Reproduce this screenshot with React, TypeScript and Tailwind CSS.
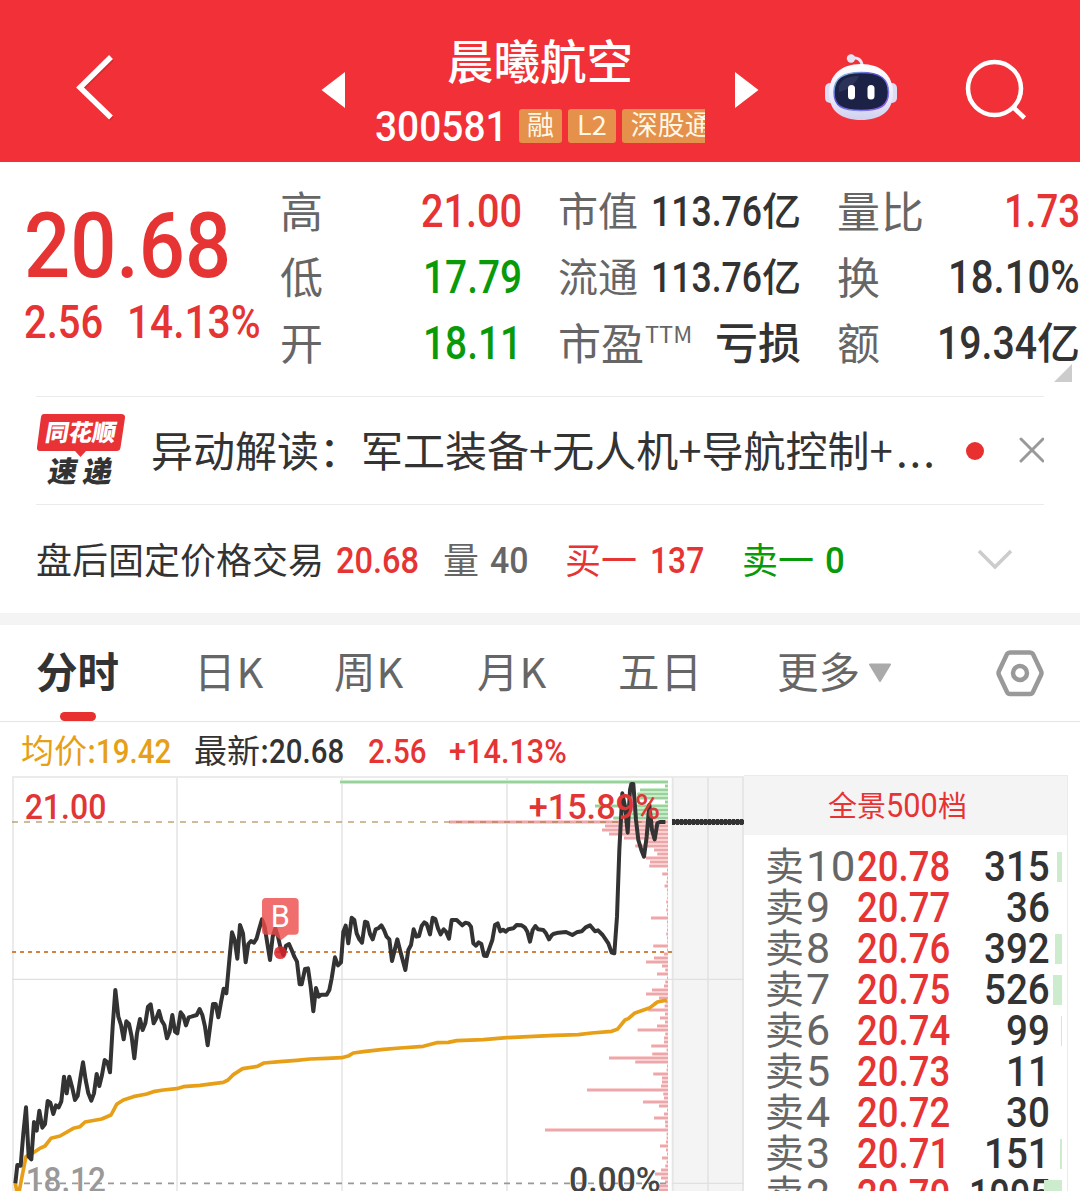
import React, { useLayoutEffect, useRef, useState } from 'react';
import clsx from 'clsx';

const CJK = "font-['Noto_Sans_CJK_SC',sans-serif]";
const RED = 'text-[#e63333]';
const GREEN = 'text-[#089a08]';
const DARK = 'text-[#333333]';
const GRAY = 'text-[#666666]';

interface NumProps {
    width: number;
    className?: string;
    children: React.ReactNode;
}

// 数字使用窄体，按给定宽度横向压缩
const Num: React.FC<NumProps> = ({ width, className, children }) => {
    const ref = useRef<HTMLSpanElement>(null);
    const [scale, setScale] = useState(0.85);

    useLayoutEffect(() => {
        if (ref.current) setScale(width / ref.current.offsetWidth);
    }, [width]);

    return (
        <span className={clsx('block shrink-0 font-[Roboto,sans-serif] font-medium', className)} style={{ width }}>
            <span
                ref={ref}
                className="inline-block origin-left whitespace-pre"
                style={{ transform: `scaleX(${scale})` }}
            >
                {children}
            </span>
        </span>
    );
};

const RobotIcon = () => (
    <svg width="72" height="68" viewBox="0 0 72 68">
        <defs>
            <linearGradient id="shell" x1="0" y1="0" x2="0" y2="1">
                <stop offset="0" stopColor="#ffffff" />
                <stop offset="0.6" stopColor="#eceafa" />
                <stop offset="1" stopColor="#cfd0f0" />
            </linearGradient>
            <linearGradient id="rim" x1="0" y1="0" x2="1" y2="1">
                <stop offset="0" stopColor="#8fe3ee" />
                <stop offset="0.4" stopColor="#5b4ad0" />
                <stop offset="0.7" stopColor="#7f86f0" />
                <stop offset="1" stopColor="#8b3fe0" />
            </linearGradient>
        </defs>
        <path d="M27 4.500 C33 3 37 6 37 12" fill="none" stroke="#e9e4f6" strokeWidth="3" />
        <circle cx="26" cy="4.500" r="4.200" fill="#e4e3f5" />
        <rect x="0" y="29" width="10" height="20" rx="5" fill="#dcdcf3" />
        <rect x="62" y="29" width="10" height="20" rx="5" fill="#dcdcf3" />
        <path d="M36 10 C56 10 68 21 68 39 C68 57 56 66 36 66 C16 66 4 57 4 39 C4 21 16 10 36 10Z" fill="url(#shell)" />
        <path
            d="M36 18.500 C54 18.500 63.500 24 63.500 38 C63.500 52 55 56.500 36 56.500 C17 56.500 9 52 9 38 C9 24 18 18.500 36 18.500Z"
            fill="#1c2245"
            stroke="url(#rim)"
            strokeWidth="1.500"
        />
        <path d="M14 32 C17 24 25 22 34 22 C30 31 22 36 14 38Z" fill="#343b61" opacity="0.7" />
        <rect x="23" y="31" width="7" height="14.500" rx="3.500" fill="#fff" />
        <rect x="42.500" y="31" width="7" height="14.500" rx="3.500" fill="#fff" />
    </svg>
);

const TAGS = [
    { text: '融', pad: 'px-[8px]' },
    { text: 'L2', pad: 'px-[9px]' },
    { text: '深股通', pad: 'px-[9px]' },
];

const Header = () => (
    <header className="flex h-[162px] bg-[#f23037]">
        <svg width="321" height="162" viewBox="0 0 321 162" fill="none" className="shrink-0">
            <path d="M112 59 L81 89 L112 119" stroke="#b3242a" strokeOpacity="0.5" strokeWidth="5" />
            <path d="M111 57 L80 87.500 L111 117.500" stroke="#fff" strokeWidth="5.500" />
        </svg>
        <svg width="24" height="162" viewBox="0 0 24 162" className="shrink-0">
            <path d="M0.500 90 L24 72 V108Z" fill="#fff" />
        </svg>
        <div className="flex w-[390px] flex-col items-center pt-[32px]">
            <h1 className={clsx('text-[46.500px] leading-[54px] font-medium text-white', CJK)}>晨曦航空</h1>
            <div className="mt-[18px] flex w-[330px] gap-[6px] overflow-hidden">
                <Num width={133} className="mr-[5px] text-[43px] leading-[44px] text-white">
                    300581
                </Num>
                {TAGS.map((tag) => (
                    <span
                        key={tag.text}
                        className={clsx(
                            'mt-[5px] h-[34px] shrink-0 rounded-[3px] bg-[#e5904b] text-[27px] leading-[30px] text-[#fff8e6]',
                            tag.pad,
                            CJK
                        )}
                    >
                        {tag.text}
                    </span>
                ))}
            </div>
        </div>
        <svg width="24" height="162" viewBox="0 0 24 162" className="shrink-0">
            <path d="M23.500 90 L0 72 V108Z" fill="#fff" />
        </svg>
        <div className="mt-[54px] ml-[66px]">
            <RobotIcon />
        </div>
        <svg width="64" height="64" viewBox="0 0 64 64" fill="none" className="mt-[58px] ml-[67px]">
            <circle cx="30.500" cy="30.500" r="26.500" stroke="#fff" strokeWidth="4.500" />
            <path d="M49 49 L60.500 60" stroke="#fff" strokeWidth="4.500" />
        </svg>
    </header>
);

interface StatProps {
    label: React.ReactNode;
    value: string;
    width: number;
    color?: string;
    small?: boolean;
    unit?: string;
}

const Stat: React.FC<StatProps> = ({ label, value, width, color = DARK, small, unit }) => (
    <div className="flex h-[66px] items-center justify-between">
        <span
            className={clsx('flex pb-[4px] leading-[58px]', GRAY, CJK, small ? 'text-[40px]' : 'text-[43px]')}
        >
            {label}
        </span>
        <span className={clsx('flex items-center', color)}>
            {value && (
                <Num width={width} className={clsx('pt-[2px] leading-[60px]', small ? 'text-[42px]' : 'text-[45.500px]')}>
                    {value}
                </Num>
            )}
            {unit && (
                <span
                    className={clsx(
                        'font-medium leading-[54px]',
                        CJK,
                        small ? 'pb-[7px] text-[39px]' : 'pb-[6px] text-[43px]'
                    )}
                >
                    {unit}
                </span>
            )}
        </span>
    </div>
);

const Quote = () => (
    <section className="relative flex h-[234px] pt-[16px]">
        <div className={clsx('w-[280px] shrink-0 pt-[22px] pl-[24px]', RED)}>
            <Num width={207} className="text-[91px] leading-[92px]">
                20.68
            </Num>
            <div className="mt-[4px] flex gap-[24px]">
                <Num width={79} className="text-[45.500px] leading-[54px]">
                    2.56
                </Num>
                <Num width={134} className="text-[45.500px] leading-[54px]">
                    14.13%
                </Num>
            </div>
        </div>
        <div className="w-[242px] shrink-0">
            <Stat label="高" value="21.00" width={101} color={RED} />
            <Stat label="低" value="17.79" width={99} color={GREEN} />
            <Stat label="开" value="18.11" width={99} color={GREEN} />
        </div>
        <div className="ml-[36px] w-[243px] shrink-0">
            <Stat label="市值" value="113.76" width={111} unit="亿" small />
            <Stat label="流通" value="113.76" width={111} unit="亿" small />
            <Stat
                label={
                    <>
                        市盈<span className="ml-px text-[23.500px] leading-[42px]">TTM</span>
                    </>
                }
                value=""
                width={0}
                unit="亏损"
            />
        </div>
        <div className="ml-[36px] w-[243px] shrink-0">
            <Stat label={<span className="tracking-[1px]">量比</span>} value="1.73" width={76} color={RED} />
            <Stat label="换" value="18.10%" width={132} />
            <Stat label="额" value="19.34" width={100} unit="亿" />
        </div>
        <svg width="18" height="18" viewBox="0 0 18 18" className="absolute right-[8px] bottom-[14px]">
            <path d="M18 0 V18 H0Z" fill="#cccccc" />
        </svg>
    </section>
);

const NewsBar = () => (
    <section className="mx-[36px] flex h-[109px] items-center border-y border-[#ebebeb]">
        <div className={clsx('relative h-[74px] w-[90px] shrink-0 font-black', CJK)}>
            <svg width="90" height="74" viewBox="0 0 90 74" className="absolute inset-0">
                <path
                    d="M8 0 H85 Q89.500 0 89 4 L84.500 33.500 Q84 37 80.500 37 H50 L44.500 43 L39 37 H4 Q0.500 37 1 33 L5 3 Q5.500 0 8 0Z"
                    fill="#e83236"
                />
            </svg>
            <div className="relative -skew-x-10 pl-[10px] text-[23.500px] leading-[35px] text-white">同花顺</div>
            <div className="relative -skew-x-10 pl-[13px] text-[29px] leading-[41px] tracking-[6px] whitespace-nowrap text-[#333333]">
                速递
            </div>
        </div>
        <p className={clsx('ml-[25px] w-[815px] shrink-0 pb-[4px] text-[42px] leading-[60px] whitespace-nowrap', DARK, CJK)}>
            异动解读：军工装备+无人机+导航控制+<span className="ml-[3px] tracking-[2px]">...</span>
        </p>
        <span className="h-[18px] w-[18px] shrink-0 rounded-full bg-[#e83030]" />
        <svg width="26" height="26" viewBox="0 0 26 26" className="-mt-[2px] ml-[34px]">
            <path d="M3 2 L25 24 M25 2 L3 24" stroke="#999999" strokeWidth="3" strokeLinecap="round" />
        </svg>
    </section>
);

const AfterHours = () => (
    <section className={clsx('flex h-[108px] items-center pb-[2px] pl-[36px] text-[36px] leading-[52px]', DARK, CJK)}>
        <span className="w-[300px]">盘后固定价格交易</span>
        <Num width={83} className={clsx('pt-[6px] text-[36.500px]', RED)}>
            20.68
        </Num>
        <span className={clsx('ml-[24px] w-[47px]', GRAY)}>量</span>
        <Num width={39} className={clsx('pt-[6px] text-[36.500px]', GRAY)}>
            40
        </Num>
        <span className={clsx('ml-[36px] w-[85px]', RED)}>买一</span>
        <Num width={54} className={clsx('pt-[6px] text-[36.500px]', RED)}>
            137
        </Num>
        <span className={clsx('ml-[38px] w-[83px]', GREEN)}>卖一</span>
        <Num width={20} className={clsx('pt-[6px] text-[36.500px]', GREEN)}>
            0
        </Num>
        <svg width="38" height="24" viewBox="0 0 38 24" className="mt-[4px] ml-[131px]">
            <path d="M3 3 L19 19 L35 3" fill="none" stroke="#cccccc" strokeWidth="3.500" />
        </svg>
    </section>
);

const TABS = [
    { name: '日K', box: 'w-[140px]' },
    { name: '周K', box: 'w-[143px]' },
    { name: '月K', box: 'w-[141px]' },
    { name: '五日', box: 'w-[159px]' },
];

const Tabs = () => (
    <nav className={clsx('flex h-[97px] border-b border-[#e5e5e5] pl-[36px] text-[41.500px] leading-[90px]', GRAY, CJK)}>
        <div className="flex w-[158px] flex-col">
            <span className={clsx('h-[87px] font-bold', DARK)}>分时</span>
            <span className="ml-[24px] h-[9px] w-[36px] rounded-full bg-[#e83030]" />
        </div>
        {TABS.map((tab) => (
            <span key={tab.name} className={clsx('tracking-[1px]', tab.box)}>
                {tab.name}
            </span>
        ))}
        <span>更多</span>
        <svg width="24" height="20" viewBox="0 0 24 20" className="mt-[38px] ml-[8px]">
            <path d="M2 1.500 H22 L12 18Z" fill="#aaaaaa" stroke="#aaaaaa" strokeWidth="2" strokeLinejoin="round" />
        </svg>
        <svg width="50" height="48" viewBox="0 0 50 48" className="mt-[24px] ml-[103px]">
            <path
                d="M15 3.500 H35 Q37 3.500 38 5 L46 22 Q47 24 46 26 L38 43 Q37 45 35 45 H15 Q13 45 12 43 L4 26 Q3 24 4 22 L12 5 Q13 3.500 15 3.500Z"
                fill="none"
                stroke="#999999"
                strokeWidth="4.500"
            />
            <circle cx="25" cy="24" r="7" fill="none" stroke="#999999" strokeWidth="4.500" />
        </svg>
    </nav>
);

const Summary = () => (
    <div className={clsx('flex h-[53px] pl-[21px] text-[33px] leading-[54px] whitespace-nowrap', DARK, CJK)}>
        <span className="w-[75px] text-[#e69f17]">均价:</span>
        <Num width={75} className="text-[33px] leading-[60px] text-[#e69f17]">
            19.42
        </Num>
        <span className="ml-[23px] w-[75px]">最新:</span>
        <Num width={75} className="text-[33px] leading-[60px]">
            20.68
        </Num>
        <Num width={58} className={clsx('ml-[24px] text-[33px] leading-[60px]', RED)}>
            2.56
        </Num>
        <Num width={118} className={clsx('ml-[23px] text-[33px] leading-[60px]', RED)}>
            +14.13%
        </Num>
    </div>
);

// 分时图坐标: 3 个单位 = 1px
const PRICE =
    '46,1240 52,1185 62,1187 70,1090 78,1012 86,1160 94,1168 102,1056 110,1082 118,1022 127,1073 135,1062 143,993 151,998 160,1032 168,1006 176,1012 184,994 192,920 200,970 208,920 216,950 225,990 233,978 241,925 249,877 257,930 265,970 274,992 282,970 290,912 298,948 306,915 314,870 322,876 330,907 338,770 346,660 355,740 363,765 371,808 379,754 387,762 395,800 403,865 411,790 420,747 428,780 436,760 444,710 452,703 461,760 469,745 477,723 485,752 493,765 501,805 509,785 517,735 525,785 532,790 542,727 550,738 558,766 566,742 574,740 590,735 599,717 607,735 615,770 623,826 631,765 639,702 647,702 655,742 663,697 671,656 679,670 688,570 696,487 704,510 712,566 720,465 729,490 737,577 745,522 753,513 762,518 770,505 778,475 786,448 794,470 802,520 810,570 818,500 826,475 834,500 842,535 850,555 858,527 867,522 875,540 883,560 891,575 899,643 905,643 915,597 924,595 932,650 940,724 948,654 956,680 964,674 980,674 988,660 995,625 1005,562 1014,586 1023,577 1030,485 1037,467 1045,520 1055,443 1063,450 1070,490 1078,508 1086,518 1095,455 1102,458 1110,492 1118,508 1127,478 1136,474 1144,466 1152,480 1160,500 1168,508 1176,573 1192,508 1200,540 1208,570 1216,600 1225,540 1233,525 1241,478 1249,500 1257,498 1265,468 1273,457 1280,462 1290,493 1298,443 1306,447 1314,475 1322,493 1331,478 1338,485 1347,506 1355,450 1370,450 1387,466 1396,458 1405,460 1413,470 1420,520 1428,527 1436,517 1444,522 1452,557 1460,558 1468,535 1477,510 1485,465 1493,460 1501,484 1509,479 1517,485 1525,478 1540,475 1550,465 1565,466 1575,473 1582,485 1590,515 1598,480 1606,468 1614,478 1630,480 1638,490 1647,508 1655,496 1660,492 1675,488 1698,486 1717,495 1730,487 1745,484 1757,472 1770,466 1785,484 1794,481 1808,495 1825,520 1835,548 1843,550 1851,440 1858,240 1867,70 1875,110 1883,188 1890,60 1894,42 1900,42 1908,150 1915,210 1924,240 1932,260 1940,200 1948,105 1956,180 1964,208 1972,160 1980,156 1996,156';

const AVERAGE =
    '46,1240 50,1262 58,1262 66,1220 78,1160 90,1153 102,1147 118,1136 135,1128 153,1105 180,1098 220,1075 240,1070 255,1056 305,1047 333,1035 350,1003 370,990 400,980 440,972 460,965 490,960 530,956 550,950 600,946 670,937 684,930 700,914 728,896 772,889 792,879 840,875 890,871 930,867 980,865 1025,863 1047,857 1060,849 1090,845 1150,838 1200,834 1270,829 1310,818 1345,817 1370,812 1450,809 1520,803 1600,799 1665,796 1735,794 1775,789 1835,784 1852,778 1875,750 1885,746 1903,730 1950,713 1972,696 1996,691';

// 筹码分布: 每档条形的长度，由上至下
const CHIPS_UP = [984, 9, 84, 92, 84, 9, 219, 129, 129, 164];
const CHIPS_DOWN = [
    657, 189, 198, 177, 132, 69, 98, 42, 32, 66, 54, 56, 3, 17, 3, 4, 10, 3, 2, 2, 5, 3, 5, 3, 51, 3, 2, 3, 5, 3, 2, 44,
    3, 12, 42, 66, 18, 8, 33, 3, 8, 12, 48, 66, 27, 8, 10, 59, 9, 24, 9, 33, 91, 8, 12, 12, 50, 4, 47, 177, 98, 3, 4, 44,
    18, 18, 21, 243, 14, 12, 75, 27, 3, 12, 42, 9, 8, 369, 4, 4, 6, 24, 6, 3, 18, 4, 8, 21, 39, 21, 9, 27, 27,
];

const Chips: React.FC<{ data: number[]; top: number; light: string; deep: string }> = ({ data, top, light, deep }) => (
    <g>
        {data.map((len, i) => (
            <g key={i}>
                <rect x={2004 - len} y={top + i * 12 - 6} width={len} height={12} fill={light} />
                <rect x={2004 - len} y={top + i * 12 - 3} width={len} height={6} fill={deep} />
            </g>
        ))}
    </g>
);

const Chart = () => (
    <svg
        width="744"
        height="416"
        viewBox="0 15 2232 1248"
        className="shrink-0 font-[Roboto,sans-serif] font-medium"
        fill="none"
    >
        <rect x="2016" y="18" width="216" height="1245" fill="#f4f4f4" />
        <path d="M36 21 H2232 M39 21 V1263 M531 21 V1263 M1026 21 V1263 M1521 21 V1263" stroke="#ebebeb" strokeWidth="6" />
        <path d="M2018 21 V1263 M2124 21 V1263 M2229 21 V1263" stroke="#e6e6e6" strokeWidth="6" />
        <path d="M36 628 H2232" stroke="#e0e0e0" strokeWidth="4" />
        <path d="M2016 1240 H2232" stroke="#e0e0e0" strokeWidth="4" />

        <Chips data={CHIPS_UP} top={36} light="#c6efc8" deep="#9ccf9e" />
        <Chips data={CHIPS_DOWN} top={156} light="#fccfd0" deep="#eba8aa" />

        <path d="M36 156 H2004" stroke="#9a7430" strokeOpacity="0.65" strokeWidth="5" strokeDasharray="18 18" />
        <path d="M36 546 H2016" stroke="#d08440" strokeWidth="6" strokeDasharray="12 12" />
        <path d="M72 1240 H2004" stroke="#999999" strokeWidth="5" strokeDasharray="18 18" />

        <polyline points={AVERAGE} stroke="#e69f17" strokeWidth="11" strokeLinejoin="round" strokeLinecap="round" />
        <polyline points={PRICE} stroke="#333333" strokeWidth="12" strokeLinejoin="round" />
        <path d="M2016 156 H2232" stroke="#333333" strokeWidth="13" />
        <path d="M2016 156 H2232" stroke="#333333" strokeWidth="18" strokeDasharray="9 3" />

        {/* 买入标记 */}
        <circle cx="841" cy="548" r="19" fill="#d8232a" fillOpacity="0.85" />
        <path
            d="M798 384 H884 Q896 384 896 396 V482 Q896 494 884 494 H864 L843 511 L822 494 H798 Q786 494 786 482 V396 Q786 384 798 384Z"
            fill="#ec4a4a"
            fillOpacity="0.8"
        />
        <text x="841" y="470" fontSize="92" textAnchor="middle" fill="#fff" className="font-normal">
            B
        </text>

        <text x="74" y="148" fontSize="107" textLength="245" lengthAdjust="spacingAndGlyphs" fill="#e03636">
            21.00
        </text>
        <text x="1586" y="148" fontSize="107" textLength="395" lengthAdjust="spacingAndGlyphs" fill="#e03636">
            +15.89%
        </text>
        <text x="77" y="1266" fontSize="107" textLength="241" lengthAdjust="spacingAndGlyphs" fill="#999999">
            18.12
        </text>
        <text x="1707" y="1266" fontSize="107" textLength="275" lengthAdjust="spacingAndGlyphs" fill="#444444">
            0.00%
        </text>
    </svg>
);

const ASKS = [
    { level: 10, price: '20.78', volume: '315', bar: 5 },
    { level: 9, price: '20.77', volume: '36', bar: 0 },
    { level: 8, price: '20.76', volume: '392', bar: 7 },
    { level: 7, price: '20.75', volume: '526', bar: 9 },
    { level: 6, price: '20.74', volume: '99', bar: 1 },
    { level: 5, price: '20.73', volume: '11', bar: 0 },
    { level: 4, price: '20.72', volume: '30', bar: 0 },
    { level: 3, price: '20.71', volume: '151', bar: 2 },
    { level: 2, price: '20.70', volume: '1005', bar: 18 },
];

const OrderBook = () => (
    <aside className="h-[416px] w-[324px] shrink-0 overflow-hidden border-t border-r border-[#ebebeb]">
        <div className={clsx('flex h-[59px] bg-[#f4f4f4] pl-[84px] text-[29px] leading-[56px]', RED, CJK)}>
            全景
            <Num width={52} className="text-[32.500px] leading-[60px] font-normal">
                500
            </Num>
            档
        </div>
        <div className="pt-[11px]">
            {ASKS.map((ask) => (
                <div key={ask.level} className="relative flex h-[41px] items-center pl-[21px] leading-[41px]">
                    <span className={clsx('w-[41px] pb-[7px] text-[39px] leading-[34px]', GRAY, CJK)}>卖</span>
                    <span className="w-[51px]">
                        <Num
                            width={ask.level === 10 ? 49 : 24}
                            className={clsx('text-[43px] font-normal', GRAY)}
                        >
                            {ask.level}
                        </Num>
                    </span>
                    <Num width={93} className={clsx('text-[42px]', RED)}>
                        {ask.price}
                    </Num>
                    <span className="flex w-[100px] justify-end">
                        <Num
                            width={ask.volume.length > 3 ? 81 : ask.volume.length * 22}
                            className={clsx('text-[42px]', DARK)}
                        >
                            {ask.volume}
                        </Num>
                    </span>
                    <span
                        className="absolute right-[5px] h-[30px] bg-[#cdebcd]"
                        style={{ width: ask.bar }}
                    />
                </div>
            ))}
        </div>
    </aside>
);

const App: React.FC = () => {
    return (
        <div className="h-[1191px] w-[1080px] overflow-hidden bg-white">
            <Header />
            <Quote />
            <NewsBar />
            <AfterHours />
            <div className="h-[12px] bg-[#f4f4f4]" />
            <Tabs />
            <Summary />
            <div className="flex">
                <Chart />
                <OrderBook />
            </div>
        </div>
    );
};

export default App;
